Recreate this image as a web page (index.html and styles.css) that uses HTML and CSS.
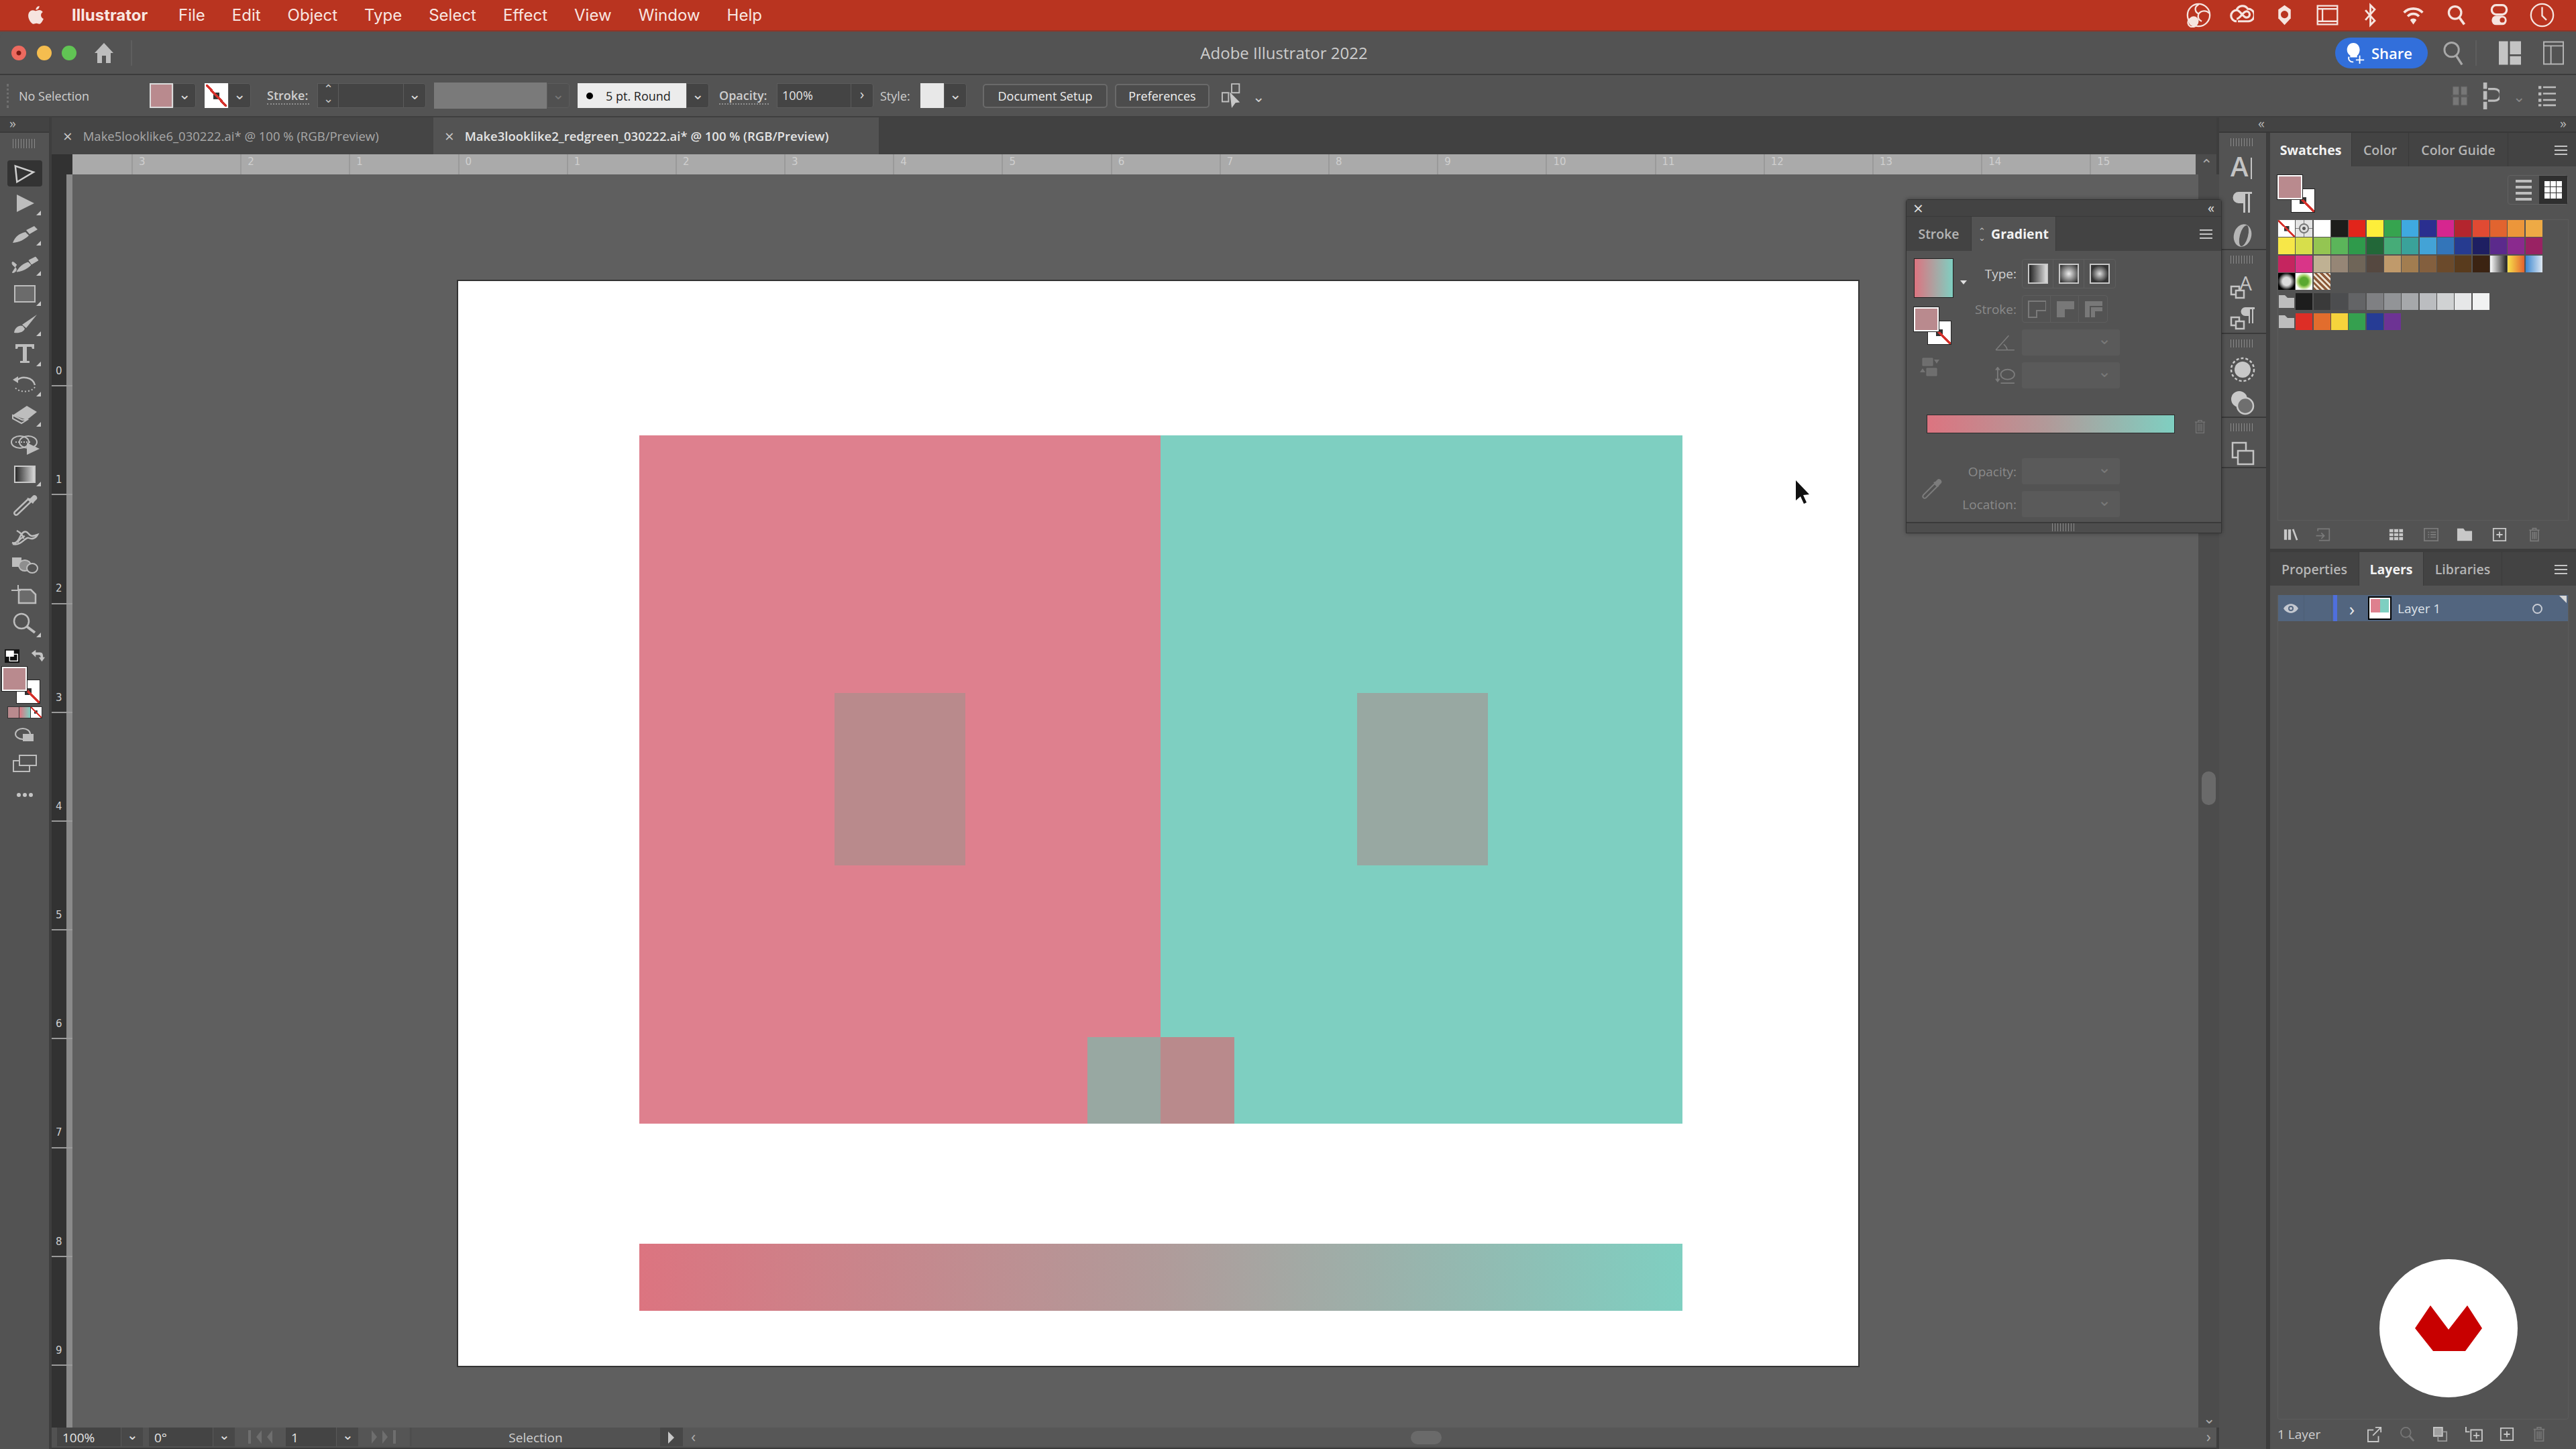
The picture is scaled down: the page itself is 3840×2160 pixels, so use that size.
FILE: index.html
```html
<!DOCTYPE html>
<html lang="en">
<head>
  <meta charset="UTF-8" />
  <title>Adobe Illustrator 2022</title>
  <link rel="stylesheet" href="styles.css">
</head>
<body>
  <!-- mac menu bar -->
  <header class="menubar">
    <svg class="apple" viewBox="0 0 24 30"><path d="M17 2c.3 3-2.400 5.600-5 5.400C11.700 4.700 14.400 2.200 17 2zM12 9c1.300 0 2.700-1.200 5-1.200 1.800 0 3.800 1 5 2.800-4 2.400-3.300 8 1 9.800-1.200 3.200-3.600 7.400-6 7.400-1.600 0-2.400-1-4.200-1s-2.800 1-4.300 1C5.500 27.800 1 21.500 1 16c0-5.200 3.300-8.100 6.500-8.100 1.900 0 3.400 1.100 4.500 1.100z" fill="#f6e4df"/></svg>
    <strong>Illustrator</strong>
    <span>File</span><span>Edit</span><span>Object</span><span>Type</span><span>Select</span><span>Effect</span><span>View</span><span>Window</span><span>Help</span>
    <div class="tray">
      <svg viewBox="0 0 40 40"><circle cx="20" cy="20" r="18" fill="none" stroke="#f6e4df" stroke-width="2.500"/><path d="M20 3c-8 4-6 12 0 15 4-6 13-6 17-1M20 18c-2 6 0 10 5 12M4 28a7 7 0 0 0 12 8 7 7 0 0 0-12-8z" fill="none" stroke="#f6e4df" stroke-width="2.500"/><circle cx="12" cy="30" r="8" fill="#f6e4df"/></svg>
      <svg viewBox="0 0 40 40"><path d="M12 30a9 9 0 0 1 0-18c6 0 10 12 16 12a5 5 0 0 0 0-10c-6 0-10 12-16 12M12 12a10 10 0 0 1 18-2 9 9 0 0 1 1 20H14" fill="none" stroke="#f6e4df" stroke-width="3.500"/></svg>
      <svg viewBox="0 0 40 40"><path d="M20 4l10 7v14l-10 11-10-11V11z" fill="#f6e4df"/><circle cx="20" cy="19" r="6" fill="#b93420"/></svg>
      <svg viewBox="0 0 40 40"><path d="M4 5h32v30H4zM4 10h32M12 10v20M4 30h32" fill="none" stroke="#f6e4df" stroke-width="2.500"/></svg>
      <svg viewBox="0 0 40 40"><path d="M12 12l15 17-7 7V4l7 7-15 17" fill="none" stroke="#f6e4df" stroke-width="3"/></svg>
      <svg viewBox="0 0 40 40"><path d="M5 16a21 21 0 0 1 30 0M11 22a12 12 0 0 1 18 0" fill="none" stroke="#f6e4df" stroke-width="4"/><path d="M20 35l-5-7a6 6 0 0 1 10 0z" fill="#f6e4df"/></svg>
      <svg viewBox="0 0 40 40"><circle cx="18" cy="16" r="10" fill="none" stroke="#f6e4df" stroke-width="3.500"/><path d="M25 24l8 11" stroke="#f6e4df" stroke-width="4"/></svg>
      <svg viewBox="0 0 40 40"><rect x="8" y="4" width="24" height="15" rx="7" fill="none" stroke="#f6e4df" stroke-width="3.500"/><rect x="8" y="21" width="24" height="15" rx="7" fill="#f6e4df"/><circle cx="25" cy="28" r="4" fill="#b93420"/></svg>
      <svg viewBox="0 0 40 40"><circle cx="20" cy="20" r="18" fill="none" stroke="#f6e4df" stroke-width="2.500"/><path d="M20 7v14l7 7" fill="none" stroke="#f6e4df" stroke-width="2.500"/></svg>
    </div>
  </header>

  <!-- app title bar -->
  <div class="titlebar">
    <i class="dot red"></i><i class="dot yellow"></i><i class="dot green"></i>
    <svg class="home" viewBox="0 0 32 30"><path d="M16 0l14 15h-4v15h-7V19h-6v11H6V15H2z" fill="#bdbdbd"/></svg>
    <i class="title-sep"></i>
    <div class="app-title">Adobe Illustrator 2022</div>
    <button class="share">
      <svg viewBox="0 0 36 36"><path d="M16 2c6 0 10 5 10 11 0 4-2 8-4 9v3H11v-3c-3-2-5-5-5-9C6 7 10 2 16 2z" fill="#fff"/><path d="M9 24a6 6 0 0 0 7 8M26 22v13M20 29h13" fill="none" stroke="#fff" stroke-width="2"/></svg>
      Share
    </button>
    <svg class="title-ico search" viewBox="0 0 32 40"><circle cx="14" cy="15" r="11" fill="none" stroke="#a8a8a8" stroke-width="3"/><path d="M21 24l9 14" stroke="#a8a8a8" stroke-width="3.500"/></svg>
    <i class="title-sep right"></i>
    <svg class="title-ico layout" viewBox="0 0 34 36"><path d="M0 0h14v36H0zM17 0h17v20H17zM17 23h17v13H17z" fill="#c4c4c4"/></svg>
    <svg class="title-ico window" viewBox="0 0 32 36"><path d="M1 1h30v34H1zM1 7h30M12 7v28" fill="none" stroke="#b5b5b5" stroke-width="2"/></svg>
  </div>

  <!-- control bar -->
  <div class="controlbar">
    <span class="grip-v"></span>
    <span class="ctl-label no-sel">No Selection</span>
    <span class="chip fill-chip"></span><span class="chev-box">&#8964;</span>
    <span class="chip none-chip"></span><span class="chev-box">&#8964;</span>
    <span class="ctl-label stroke-label">Stroke:</span>
    <span class="spinner">&#8963;<br>&#8964;</span>
    <span class="ctl-field stroke-field"></span><span class="chev-box">&#8964;</span>
    <span class="dash-field"></span><span class="chev-box off">&#8964;</span>
    <span class="brush-field"><i></i>5 pt. Round</span><span class="chev-box">&#8964;</span>
    <span class="ctl-label opacity-label">Opacity:</span>
    <span class="ctl-field opacity-field">100%</span><span class="chev-box">&#8250;</span>
    <span class="ctl-label style-label">Style:</span>
    <span class="chip style-chip"></span><span class="chev-box">&#8964;</span>
    <button class="ctl-btn doc-btn">Document Setup</button>
    <button class="ctl-btn pref-btn">Preferences</button>
    <svg class="arrange" viewBox="0 0 34 40"><path d="M16 1h12v14H16zM1 15h10v14H1z" fill="none" stroke="#c0c0c0" stroke-width="2"/><path d="M13 14l16 16-7 1-6 8z" fill="#c8c8c8"/></svg>
    <span class="plain-chev">&#8964;</span>
    <div class="ctl-right">
      <svg viewBox="0 0 30 40"><path d="M3 4h10v14H3zM17 4h10v14H17zM3 22h10v14H3zM17 22h10v14H17zM0 20h30" fill="#777" stroke="#666"/></svg>
      <svg viewBox="0 0 30 50"><path d="M1 0h7v12H1zM1 16h7v16H1zM1 36h7v14H1z" fill="#bcbcbc"/><path d="M10 12h12a8 8 0 0 1 0 22H10" fill="none" stroke="#bcbcbc" stroke-width="4"/></svg>
      <span class="plain-chev off">&#8964;</span>
      <svg class="ctl-list" viewBox="0 0 30 40"><path d="M0 3h5v5H0zM0 14h5v5H0zM0 25h5v5H0zM0 34h5v4H0z" fill="#bcbcbc"/><path d="M8 5h22M8 16h22M8 27h22M8 36h22" stroke="#bcbcbc" stroke-width="3"/></svg>
    </div>
  </div>

  <div class="workspace">
    <!-- tools -->
    <aside class="toolbar">
      <div class="strip-arrows">&#187;</div>
      <div class="grip"></div>
      <div class="tools">
        <div class="tool active"><svg viewBox="0 0 44 44"><path d="M9 10l26 12-26 12z" fill="none" stroke="#cfcfcf" stroke-width="2.500" transform="rotate(-6 22 22)"/></svg></div>
        <div class="tool more"><svg viewBox="0 0 44 44"><path d="M10 9l26 13-26 13z" fill="#bdbdbd"/></svg></div>
        <div class="tool more"><svg viewBox="0 0 44 44"><path d="M4 36c4-10 10-14 19-16l5 5c-6 6-14 10-24 11zM24 17l12-6 5 5-12 7z" fill="#bdbdbd"/></svg></div>
        <div class="tool more"><svg viewBox="0 0 44 44"><path d="M10 34c5-9 11-12 17-14l4 4c-5 5-12 9-21 10zM28 17l10-5 4 5-10 6zM10 24c-4-4-7-6-7-3 0 5 8 6 6 11-1 3-5 4-6 3" fill="#bdbdbd" stroke="#bdbdbd"/></svg></div>
        <div class="tool more"><svg viewBox="0 0 44 44"><rect x="7" y="10" width="30" height="24" fill="#6b6b6b" stroke="#bdbdbd" stroke-width="2"/></svg></div>
        <div class="tool more"><svg viewBox="0 0 44 44"><path d="M18 24L40 9 24 29zM6 36c1-8 8-12 13-10l3 4c-2 5-8 7-16 6z" fill="#bdbdbd"/></svg></div>
        <div class="tool more"><svg viewBox="0 0 44 44"><path d="M8 8h28v7h-3l-1-3H25v21h4v3H15v-3h4V12h-7l-1 3H8z" fill="#bdbdbd"/></svg></div>
        <div class="tool more"><svg viewBox="0 0 44 44"><path d="M9 18a16 14 0 0 1 28 6" fill="none" stroke="#bdbdbd" stroke-width="2.500"/><path d="M37 27a16 10 0 0 1-30 0" fill="none" stroke="#bdbdbd" stroke-width="2" stroke-dasharray="2 3"/><path d="M4 16l8-5 0 10z" fill="#bdbdbd"/></svg></div>
        <div class="tool more"><svg viewBox="0 0 44 44"><path d="M4 24L25 10l15 9-15 12z" fill="#bdbdbd"/><path d="M4 24l14 7 7 0-8 5-13-7z" fill="#535353" stroke="#bdbdbd" stroke-width="2"/></svg></div>
        <div class="tool"><svg viewBox="0 0 44 44"><ellipse cx="15" cy="19" rx="13" ry="9" fill="none" stroke="#bdbdbd" stroke-width="2"/><ellipse cx="27" cy="19" rx="13" ry="9" fill="none" stroke="#bdbdbd" stroke-width="2"/><path d="M8 19h24" stroke="#bdbdbd" stroke-dasharray="2 2" stroke-width="2"/><path d="M25 20l19 9-19 9z" fill="#bdbdbd"/></svg></div>
        <div class="tool more"><svg viewBox="0 0 44 44"><defs><linearGradient id="tg"><stop offset="0" stop-color="#222"/><stop offset="1" stop-color="#ddd"/></linearGradient></defs><rect x="7" y="10" width="30" height="24" fill="url(#tg)" stroke="#c8c8c8" stroke-width="2"/></svg></div>
        <div class="tool"><svg viewBox="0 0 44 44"><path d="M27 14L7 33c-2 3 1 6 4 4l20-19z" fill="none" stroke="#bdbdbd" stroke-width="2.500"/><path d="M25 12l9 9 2-3 4-4c2-3-3-8-6-5l-4 4z" fill="#bdbdbd"/></svg></div>
        <div class="tool"><svg viewBox="0 0 44 44"><path d="M3 34c5 2 9-2 12-9s8-10 12-5 6 5 14 2c-3 6-9 7-13 5-5-3-10 12-24 9M10 16c6 3 10 8 10 12M11 34c3-5 7-8 11-10" fill="none" stroke="#bdbdbd" stroke-width="2.500"/></svg></div>
        <div class="tool"><svg viewBox="0 0 44 44"><rect x="3" y="11" width="14" height="14" fill="#bdbdbd"/><ellipse cx="22" cy="23" rx="9" ry="8" fill="#8e8e8e" stroke="#bdbdbd" stroke-width="2"/><ellipse cx="33" cy="27" rx="8" ry="7" fill="#535353" stroke="#bdbdbd" stroke-width="2"/></svg></div>
        <div class="tool"><svg viewBox="0 0 44 44"><path d="M13 15h18l7 7v13H13z" fill="#6b6b6b" stroke="#bdbdbd" stroke-width="2.500"/><path d="M2 16h14M12 8v9" stroke="#bdbdbd" stroke-width="2"/></svg></div>
        <div class="tool more"><svg viewBox="0 0 44 44"><circle cx="17" cy="17" r="11" fill="none" stroke="#bdbdbd" stroke-width="2.500"/><path d="M25 25l12 9" stroke="#bdbdbd" stroke-width="4"/></svg></div>
      </div>
      <div class="color-ctl">
        <div class="default-row">
          <svg viewBox="0 0 26 24"><rect x="1" y="1" width="24" height="22" fill="#111"/><rect x="3" y="3" width="13" height="10" fill="#fff"/><rect x="9" y="9" width="13" height="11" fill="none" stroke="#fff" stroke-width="1.500"/></svg>
          <svg viewBox="0 0 24 24"><path d="M2 7l7-5v4h7c4 0 5 3 5 8h3l-5 7-5-7h3c0-3-1-4-3-4H9v4z" fill="#c4c4c4"/></svg>
        </div>
        <div class="fs-stack tool-fs">
          <span class="fs-stroke none-chip"></span>
          <span class="fs-fill"></span>
        </div>
        <div class="mode-row">
          <span class="mode-a"></span><span class="mode-b"></span><span class="mode-c none-chip"></span>
        </div>
        <svg class="draw-mode" viewBox="0 0 30 22"><ellipse cx="12" cy="9" rx="11" ry="8" fill="none" stroke="#bdbdbd" stroke-width="2"/><rect x="12" y="9" width="16" height="11" fill="#bdbdbd"/></svg>
        <svg class="screen-mode" viewBox="0 0 36 26"><path d="M1 9h24v16H1z" fill="#535353" stroke="#bdbdbd" stroke-width="2"/><path d="M10 1h25v15H10z" fill="#535353" stroke="#bdbdbd" stroke-width="2"/></svg>
        <div class="dots"><i></i><i></i><i></i></div>
      </div>
    </aside>

    <!-- document area -->
    <main class="main">
      <nav class="doctabs">
        <div class="doctab"><span class="x">&#215;</span>Make5looklike6_030222.ai* @ 100 % (RGB/Preview)</div>
        <div class="doctab on"><span class="x">&#215;</span>Make3looklike2_redgreen_030222.ai* @ 100 % (RGB/Preview)</div>
      </nav>
      <div class="ruler-row">
        <div class="ruler-corner"></div>
        <div class="hruler">
          <span>3</span><span>2</span><span>1</span><span>0</span><span>1</span><span>2</span><span>3</span><span>4</span><span>5</span><span>6</span><span>7</span><span>8</span><span>9</span><span>10</span><span>11</span><span>12</span><span>13</span><span>14</span><span>15</span>
        </div>
        <div class="scroll-cap">&#8963;</div>
      </div>
      <div class="mid">
        <div class="vruler">
          <span>0</span><span>1</span><span>2</span><span>3</span><span>4</span><span>5</span><span>6</span><span>7</span><span>8</span><span>9</span><span>1<br>0</span>
        </div>
        <div class="canvas">
          <div class="artboard">
            <div class="art art-pink"></div>
            <div class="art art-teal"></div>
            <div class="art sq sq-left"></div>
            <div class="art sq sq-right"></div>
            <div class="art tab-left"></div>
            <div class="art tab-right"></div>
            <div class="art art-bar"></div>
            <svg class="cursor" viewBox="0 0 24 36"><path d="M2 1l20 21-9 1 5 11-4 2-5-11-7 6z" fill="#111"/></svg>
          </div>
        </div>
        <div class="vscroll">
          <i class="thumb"></i>
          <span class="vs-down">&#8964;</span>
        </div>
      </div>
      <footer class="status">
        <span class="st-field st-zoom">100%</span><span class="st-chev">&#8964;</span>
        <span class="st-field st-rot">0&#176;</span><span class="st-chev">&#8964;</span>
        <span class="st-nav"><i class="bar"></i><i class="lt"></i><i class="lt"></i></span>
        <span class="st-field st-page">1</span><span class="st-chev">&#8964;</span>
        <span class="st-nav"><i class="gt"></i><i class="gt"></i><i class="bar"></i></span>
        <span class="st-mode">Selection</span>
        <span class="st-play"></span>
        <span class="st-hbar"><em>&#8249;</em><i></i><em class="end">&#8250;</em></span>
      </footer>
    </main>

    <!-- right dock -->
    <aside class="dock">
      <div class="dock-top"><span>&#171;</span><span>&#187;</span></div>
      <div class="dock-body">
        <div class="strip">
          <section class="strip-group g1">
            <div class="grip"></div>
            <svg viewBox="0 0 40 40"><text x="2" y="32" class="ico-a">A</text><path d="M33 4v32" stroke="#c4c4c4" stroke-width="2"/></svg>
            <svg viewBox="0 0 40 40"><path d="M14 5h20v3h-3v28h-3V8h-4v28h-3V22h-7a8.500 8.500 0 0 1 0-17z" fill="#c4c4c4"/></svg>
            <svg viewBox="0 0 40 40"><ellipse cx="20" cy="20" rx="13" ry="17" fill="#b5b5b5" transform="rotate(15 20 20)"/><ellipse cx="22" cy="20" rx="6" ry="16" fill="#535353" transform="rotate(15 20 20)"/></svg>
          </section>
          <section class="strip-group g2">
            <div class="grip"></div>
            <svg viewBox="0 0 40 40"><text x="15" y="27" class="ico-a small">A</text><path d="M3 21h12v12H3z" fill="none" stroke="#c4c4c4" stroke-width="2.500"/><path d="M10 27h12v11H10z" fill="#535353" stroke="#c4c4c4" stroke-width="2.500"/></svg>
            <svg viewBox="0 0 40 40"><path d="M24 2h14v3h-2v21h-2V5h-3v21h-2V15h-5a6.500 6.500 0 0 1 0-13z" fill="#c4c4c4"/><path d="M3 17h12v12H3z" fill="none" stroke="#c4c4c4" stroke-width="2.500"/><path d="M10 23h12v11H10z" fill="#535353" stroke="#c4c4c4" stroke-width="2.500"/></svg>
          </section>
          <section class="strip-group g3">
            <div class="grip"></div>
            <svg viewBox="0 0 40 40"><circle cx="20" cy="20" r="12" fill="#c8c8c8"/><circle cx="20" cy="20" r="17" fill="none" stroke="#c8c8c8" stroke-width="2.500" stroke-dasharray="4 3"/></svg>
            <svg viewBox="0 0 40 40"><circle cx="15" cy="14" r="12" fill="#c8c8c8"/><circle cx="24" cy="24" r="12" fill="#6f6f6f" stroke="#c8c8c8" stroke-width="2.500"/></svg>
          </section>
          <section class="strip-group g4">
            <div class="grip"></div>
            <svg viewBox="0 0 40 40"><path d="M5 4h20v22H5z" fill="none" stroke="#c4c4c4" stroke-width="2.500"/><path d="M13 16h23v20H13z" fill="#535353" stroke="#c4c4c4" stroke-width="2.500"/></svg>
          </section>
        </div>

        <div class="panels">
          <section class="panel swatches">
            <div class="ptabs">
              <span class="ptab on w-swatches">Swatches</span><span class="ptab w-color">Color</span><span class="ptab w-guide">Color Guide</span>
              <span class="burger"></span>
            </div>
            <div class="swatch-body">
              <div class="swatch-head">
                <div class="fs-stack">
                  <span class="fs-stroke none-chip"></span>
                  <span class="fs-fill"></span>
                </div>
                <div class="view-toggle">
                  <span class="v-list"><i></i><i></i><i></i><i></i></span>
                  <span class="v-grid"><i></i><i></i><i></i><i></i><i></i><i></i><i></i><i></i><i></i></span>
                </div>
              </div>
              <div class="swatch-box">
                <div class="swatch-grid">
                  <b class="none-chip"></b><b class="reg"></b><b style="background:#fff"></b><b style="background:#1d1d1b"></b><b style="background:#e1251b"></b><b style="background:#fdee3a"></b><b style="background:#36a44f"></b><b style="background:#3fa9e0"></b><b style="background:#2a2f8f"></b><b style="background:#d6268f"></b><b style="background:#b4252e"></b><b style="background:#e04a33"></b><b style="background:#e1642f"></b><b style="background:#ec963a"></b><b style="background:#eeaa45"></b>
                  <b style="background:#f7e748"></b><b style="background:#d7de4b"></b><b style="background:#94c552"></b><b style="background:#5bb55a"></b><b style="background:#2f9a4b"></b><b style="background:#226738"></b><b style="background:#46ac78"></b><b style="background:#3aa29a"></b><b style="background:#43a3d6"></b><b style="background:#3375b9"></b><b style="background:#263b90"></b><b style="background:#1e1f62"></b><b style="background:#5b2a8c"></b><b style="background:#8a2a8e"></b><b style="background:#992263"></b>
                  <b style="background:#c5255f"></b><b style="background:#d93588"></b><b style="background:#bfb193"></b><b style="background:#968676"></b><b style="background:#6f6558"></b><b style="background:#554840"></b><b style="background:#c09a6b"></b><b style="background:#a27d50"></b><b style="background:#835f3e"></b><b style="background:#6b4a2b"></b><b style="background:#593b1d"></b><b style="background:#3b2312"></b><b class="g-bw"></b><b class="g-yr"></b><b class="g-blue"></b>
                  <b class="g-rad"></b><b class="g-green"></b><b class="g-brown"></b>
                </div>
                <div class="swatch-group">
                  <svg class="folder" viewBox="0 0 25 21"><path d="M1 20V1h9l4 4h10v15z" fill="#bdbdbd"/></svg>
                  <b style="background:#1d1d1d"></b><b style="background:#3a3a3a"></b><b style="background:#4c4d4f"></b><b style="background:#636466"></b><b style="background:#7f8083"></b><b style="background:#929497"></b><b style="background:#a6a8ab"></b><b style="background:#bbbdc0"></b><b style="background:#d0d2d3"></b><b style="background:#e6e7e8"></b><b style="background:#f1f2f2"></b>
                </div>
                <div class="swatch-group">
                  <svg class="folder" viewBox="0 0 25 21"><path d="M1 20V1h9l4 4h10v15z" fill="#bdbdbd"/></svg>
                  <b style="background:#dd2e26"></b><b style="background:#e26d2d"></b><b style="background:#f6d33c"></b><b style="background:#35a04f"></b><b style="background:#263c95"></b><b style="background:#6d3394"></b>
                </div>
              </div>
              <div class="panel-foot sw-foot">
                <svg viewBox="0 0 28 24" class="f1"><path d="M1 3h5v18H1zM8 3h5v18H8zM15 3l3-1 7 19-3 1z" fill="#c8c8c8"/></svg>
                <svg viewBox="0 0 28 24" class="f2"><path d="M6 6V2h20v20H8M3 14h14m-5-5l5 5-5 5" fill="none" stroke="#7a7a7a" stroke-width="2"/></svg>
                <svg viewBox="0 0 24 24" class="f3"><path d="M1 3h22v18H1z" fill="#c8c8c8"/><path d="M8 3v18M16 3v18M1 9h22M1 15h22" stroke="#535353" stroke-width="1.500"/></svg>
                <svg viewBox="0 0 24 24" class="f4"><path d="M1 2h22v20H1zM7 8h2M11 8h9M7 12h2M11 12h9M7 16h2M11 16h9" fill="none" stroke="#7a7a7a" stroke-width="2"/></svg>
                <svg viewBox="0 0 26 22" class="f5"><path d="M1 21V1h10l3 4h11v16z" fill="#c8c8c8"/></svg>
                <svg viewBox="0 0 24 24" class="f6"><path d="M2 2h20v20H2zM7 12h10M12 7v10" fill="none" stroke="#c8c8c8" stroke-width="2"/></svg>
                <svg viewBox="0 0 22 26" class="f7"><path d="M2 5h18M8 5V2h6v3M4 5v19h14V5M8 8v13M11 8v13M14 8v13" fill="none" stroke="#7a7a7a" stroke-width="2"/></svg>
              </div>
            </div>
          </section>

          <section class="panel layers">
            <div class="ptabs">
              <span class="ptab w-props">Properties</span><span class="ptab on w-layers">Layers</span><span class="ptab w-libs">Libraries</span>
              <span class="burger"></span>
            </div>
            <div class="layers-body">
              <div class="layers-box">
                <div class="layer-row">
                  <svg class="eye" viewBox="0 0 24 16"><path d="M1 8c5-9 17-9 22 0-5 9-17 9-22 0z" fill="#c4c8d0"/><circle cx="12" cy="8" r="4" fill="#52657f"/><circle cx="12" cy="8" r="2" fill="#c4c8d0"/></svg>
                  <span class="lock-cell"></span>
                  <i class="layer-color"></i>
                  <span class="layer-arrow">&#8250;</span>
                  <span class="layer-thumb"><i class="t-pink"></i><i class="t-teal"></i></span>
                  <span class="layer-name">Layer 1</span>
                  <i class="target"></i>
                  <i class="corner"></i>
                </div>
              </div>
              <div class="panel-foot lay-foot">
                <span class="count">1 Layer</span>
                <svg viewBox="0 0 24 26" class="l1"><path d="M10 6H1v19h17v-9M9 15L22 2M13 2h9v8" fill="none" stroke="#c8c8c8" stroke-width="2"/></svg>
                <svg viewBox="0 0 24 26" class="l2"><circle cx="9" cy="10" r="8" fill="none" stroke="#777" stroke-width="2"/><path d="M15 16l7 8" stroke="#777" stroke-width="3"/></svg>
                <svg viewBox="0 0 24 26" class="l3"><path d="M1 2h14v14H1z" fill="#a0a0a0" stroke="#c8c8c8" stroke-width="2"/><path d="M15 9h7v15H8v-8" fill="none" stroke="#9a9a9a" stroke-width="2"/></svg>
                <svg viewBox="0 0 30 26" class="l4"><path d="M11 6h18v18H11zM20 10v10M15 15h10M3 1v8h6" fill="none" stroke="#c8c8c8" stroke-width="2"/></svg>
                <svg viewBox="0 0 24 24" class="l5"><path d="M2 2h20v20H2zM7 12h10M12 7v10" fill="none" stroke="#c8c8c8" stroke-width="2"/></svg>
                <svg viewBox="0 0 22 26" class="l6"><path d="M2 5h18M8 5V2h6v3M4 5v19h14V5M8 8v13M11 8v13M14 8v13" fill="none" stroke="#777" stroke-width="2"/></svg>
              </div>
            </div>
          </section>
        </div>
      </div>
    </aside>
  </div>

  <!-- floating gradient panel -->
  <section class="float-panel">
    <div class="fp-title"><span class="fp-x">&#215;</span><span class="fp-collapse">&#171;</span></div>
    <div class="ptabs fp-tabs">
      <span class="ptab w-stroke">Stroke</span>
      <span class="ptab on w-gradient"><em>&#8963;<br>&#8964;</em>Gradient</span>
      <span class="burger"></span>
    </div>
    <div class="fp-body">
      <div class="fp-left">
        <div class="grad-preview"><span class="grad-chip"></span><i></i></div>
        <div class="fs-stack big">
          <span class="fs-stroke none-chip"></span>
          <span class="fs-fill"></span>
        </div>
        <svg class="reverse" viewBox="0 0 30 28"><path d="M5 1h15v11H5zM11 16h15v11H11z" fill="#6e6e6e" stroke="#747474"/><path d="M22 3h8l-4 6zM1 22h8l-4-6z" fill="#747474"/></svg>
        <svg class="fp-drop" viewBox="0 0 34 34"><path d="M21 10L4 27c-2 3 1 6 4 4l17-17z" fill="none" stroke="#7c7c7c" stroke-width="2"/><path d="M19 8l7 7 2-3 3-3c2-3-3-8-6-5l-3 3z" fill="#7c7c7c"/></svg>
      </div>
      <div class="fp-form">
        <div class="fp-row type-row">
          <span class="fp-label on">Type:</span>
          <span class="seg">
            <b><i class="gt-linear"></i></b><b><i class="gt-radial"></i></b><b><i class="gt-free"></i></b>
          </span>
        </div>
        <div class="fp-row stroke-row">
          <span class="fp-label">Stroke:</span>
          <span class="seg off">
            <b><svg viewBox="0 0 28 28"><path d="M2 26V2h26v14H14v10z" fill="none" stroke="#7a7a7a" stroke-width="2"/></svg></b>
            <b><svg viewBox="0 0 28 28"><path d="M2 2h26v12H14v12H2z" fill="#787878"/></svg></b>
            <b><svg viewBox="0 0 28 28"><path d="M2 26V2h26v7H9v17zM11 26V11h17v6H17v9z" fill="#787878"/></svg></b>
          </span>
        </div>
        <div class="fp-row combo-row">
          <svg class="fp-ico" viewBox="0 0 28 24"><path d="M1 22h26M1 22L19 2M12 14a14 14 0 0 1 5 8" fill="none" stroke="#7c7c7c" stroke-width="1.500"/></svg>
          <span class="combo">&#8964;</span>
        </div>
        <div class="fp-row combo-row">
          <svg class="fp-ico" viewBox="0 0 32 28"><ellipse cx="20" cy="12" rx="11" ry="8" fill="none" stroke="#7c7c7c" stroke-width="2"/><path d="M4 1v22M1 5l3-4 3 4M1 19l3 4 3-4M9 26h22" fill="none" stroke="#7c7c7c" stroke-width="2"/></svg>
          <span class="combo">&#8964;</span>
        </div>
      </div>
      <div class="fp-ramp">
        <div class="ramp"></div>
        <svg class="fp-trash" viewBox="0 0 22 26"><path d="M2 5h18M8 5V2h6v3M4 5v19h14V5M8 8v13M11 8v13M14 8v13" fill="none" stroke="#757575" stroke-width="1.500"/></svg>
      </div>
      <div class="fp-form fp-lower">
        <div class="fp-row combo-row"><span class="fp-label">Opacity:</span><span class="combo">&#8964;</span></div>
        <div class="fp-row combo-row"><span class="fp-label">Location:</span><span class="combo">&#8964;</span></div>
      </div>
    </div>
    <div class="fp-foot"><div class="grip"></div></div>
  </section>

  <!-- watermark logo -->
  <div class="logo">
    <svg viewBox="0 0 100 68"><path d="M0 34L23 0l27 36L78 0l22 34-25 34H27z" fill="#c80000"/></svg>
  </div>
</body>
</html>
```

FILE: styles.css
```css
* {
  box-sizing: border-box;
}

html, body {
  margin: 0;
  width: 3840px;
  height: 2160px;
  overflow: hidden;
}

body {
  position: relative;
  display: flex;
  flex-direction: column;
  background: #535353;
  color: #c8c8c8;
  font-family: "Open Sans", "Noto Sans", sans-serif;
  font-size: 19px;
}

button {
  font-family: inherit;
}

/* ---------- menu bar ---------- */
.menubar {
  height: 47px;
  display: flex;
  align-items: center;
  padding-left: 41px;
  background: #b93420;
  color: #f8e6e1;
  font-family: "Inter", sans-serif;
  font-size: 24px;
  border-bottom: 2px solid #8d3527;
}

.apple {
  width: 25px;
  height: 31px;
  margin-right: 41px;
}

.menubar strong {
  width: 119px;
  margin-right: 40px;
  font-size: 24px;
  white-space: nowrap;
}

.menubar span {
  margin-right: 40px;
}

.tray {
  margin-left: auto;
  display: flex;
  align-items: center;
  gap: 27px;
  padding-right: 32px;
}

.tray svg {
  width: 37px;
  height: 37px;
}

/* ---------- title bar ---------- */
.titlebar {
  position: relative;
  height: 65px;
  display: flex;
  align-items: center;
  background: #535353;
  border-bottom: 2px solid #3b3b3b;
  border-radius: 10px 10px 0 0;
}

.dot {
  width: 22px;
  height: 22px;
  border-radius: 50%;
  margin-left: 15.500px;
}

.dot.red {
  margin-left: 17px;
  background: radial-gradient(circle, #7c1a14 0 3px, #ee6a5f 4px);
}

.dot.yellow {
  background: #f5bd4f;
}

.dot.green {
  background: #61c454;
}

.home {
  width: 32px;
  height: 30px;
  margin-left: 25px;
}

.title-sep {
  width: 2px;
  height: 38px;
  margin-left: 24px;
  background: #5e5e5e;
}

.app-title {
  position: absolute;
  left: 0;
  right: 0;
  padding-right: 12px;
  text-align: center;
  font-size: 24px;
  color: #cdcdcd;
  line-height: 63px;
}

.share {
  margin-left: auto;
  width: 138px;
  height: 46px;
  display: flex;
  align-items: center;
  gap: 8px;
  padding: 0 0 0 12px;
  border: 0;
  border-radius: 23px;
  background: #326fdb;
  color: #fff;
  font-size: 22px;
  font-weight: 600;
}

.share svg {
  width: 34px;
  height: 34px;
  flex: none;
}

.title-ico {
  height: 36px;
}

.title-ico.search {
  width: 31px;
  height: 40px;
  margin-left: 22px;
}

.title-sep.right {
  margin-left: 18px;
}

.title-ico.layout {
  width: 33px;
  margin-left: 33px;
}

.title-ico.window {
  width: 31px;
  margin-left: 33px;
  margin-right: 18px;
}

/* ---------- control bar ---------- */
.controlbar {
  height: 63px;
  display: flex;
  align-items: center;
  background: #535353;
  border-bottom: 2px solid #3f3f3f;
  font-size: 18px;
}

.grip-v {
  width: 3px;
  height: 36px;
  margin-left: 10px;
  border-left: 3px dotted #6f6f6f;
}

.ctl-label {
  color: #cfcfcf;
  white-space: nowrap;
}

.no-sel {
  width: 195px;
  margin-left: 15px;
}

.chip {
  width: 35px;
  height: 37px;
  border: 2px solid #dcdcdc;
}

.fill-chip {
  background: #b98a8e;
}

.none-chip {
  position: relative;
  background:
    linear-gradient(to top right, transparent 46%, #d5312b 46% 54%, transparent 54%),
    linear-gradient(#333, #333) center / 30% 30% no-repeat,
    #fff;
}

.chip.none-chip {
  margin-left: 13px;
  border-color: #fff;
}

.style-chip {
  margin-left: 11px;
  background: #e8e8e8;
  border: 0;
}

.chev-box {
  width: 34px;
  height: 37px;
  flex: none;
  background: #444;
  border: 1px solid #5c5c5c;
  border-radius: 0 4px 4px 0;
  color: #dcdcdc;
  text-align: center;
  font-size: 22px;
  line-height: 29px;
}

.chev-box.off {
  color: #777;
  background: #505050;
}

.stroke-label {
  margin-left: 24px;
  width: 63px;
  font-weight: 600;
  border-bottom: 2px dotted #8f8f8f;
}

.spinner {
  width: 32px;
  height: 37px;
  margin-left: 12px;
  background: #444;
  border: 1px solid #5c5c5c;
  text-align: center;
  font-size: 18px;
  line-height: 14px;
}

.ctl-field {
  height: 37px;
  background: #444;
  border-top: 1px solid #5c5c5c;
  border-bottom: 1px solid #5c5c5c;
}

.stroke-field {
  width: 96px;
}

.dash-field {
  width: 168px;
  height: 39px;
  margin-left: 12px;
  background: #7a7a7a;
}

.brush-field {
  width: 162px;
  height: 37px;
  margin-left: 12px;
  display: flex;
  align-items: center;
  background: #ececec;
  color: #222;
  font-size: 18px;
}

.brush-field i {
  width: 10px;
  height: 10px;
  margin: 0 19px 0 13px;
  border-radius: 50%;
  background: #000;
}

.opacity-label {
  margin-left: 15px;
  width: 74px;
  font-weight: 600;
  border-bottom: 2px dotted #8f8f8f;
}

.opacity-field {
  width: 110px;
  margin-left: 12px;
  padding-left: 7px;
  line-height: 35px;
  color: #e4e4e4;
  border-left: 1px solid #5c5c5c;
}

.style-label {
  margin-left: 10px;
  width: 49px;
}

.ctl-btn {
  height: 36px;
  background: #4c4c4c;
  border: 2px solid #6a6a6a;
  border-radius: 5px;
  color: #f0f0f0;
  font-size: 18px;
  padding: 0;
}

.doc-btn {
  width: 186px;
  margin-left: 24px;
}

.pref-btn {
  width: 141px;
  margin-left: 11px;
}

.arrange {
  width: 32px;
  height: 38px;
  margin-left: 18px;
}

.plain-chev {
  margin-left: 14px;
  font-size: 22px;
  color: #d0d0d0;
  line-height: 22px;
}

.plain-chev.off {
  color: #888;
  margin-left: 0;
}

.ctl-right {
  margin-left: auto;
  display: flex;
  align-items: center;
  gap: 20px;
  padding-right: 30px;
}

.ctl-right svg {
  width: 26px;
  height: 40px;
}

/* ---------- workspace ---------- */
.workspace {
  height: 1985px;
  display: flex;
}

.grip {
  height: 14px;
  width: 36px;
  margin: 0 auto;
  background: repeating-linear-gradient(90deg, #8a8a8a 0 1.500px, transparent 1.500px 4px);
  background-size: 100% 14px;
}

/* ---------- tool bar ---------- */
.toolbar {
  width: 77px;
  flex: none;
  background: #535353;
  border-right: 4px solid #3e3e3e;
}

.strip-arrows {
  height: 23px;
  padding-left: 14px;
  background: #434343;
  border-bottom: 2px solid #3a3a3a;
  color: #bbb;
  font-size: 20px;
  line-height: 18px;
}

.toolbar > .grip {
  margin-top: 9px;
  margin-bottom: 14.500px;
}

.tool {
  position: relative;
  width: 73px;
  height: 44.900px;
  display: flex;
  align-items: center;
  justify-content: center;
}

.tool svg {
  width: 44px;
  height: 44px;
}

.tool.active::before {
  content: "";
  position: absolute;
  left: 11px;
  top: 3px;
  width: 52px;
  height: 39px;
  background: #333;
  border-radius: 4px;
}

.tool.active svg {
  position: relative;
}

.tool.more::after {
  content: "";
  position: absolute;
  right: 12px;
  bottom: 4px;
  border-left: 7px solid transparent;
  border-bottom: 7px solid #c8c8c8;
}

.color-ctl {
  display: flex;
  flex-direction: column;
  align-items: center;
}

.default-row {
  width: 62px;
  display: flex;
  justify-content: space-between;
  margin-top: 13px;
}

.default-row svg {
  width: 24px;
  height: 22px;
}

.fs-stack {
  position: relative;
  width: 56px;
  height: 56px;
}

.tool-fs {
  margin: 5px 10px 0 0;
  width: 57px;
  height: 55px;
}

.fs-fill {
  position: absolute;
  left: 0;
  top: 0;
  width: 37px;
  height: 36px;
  background: #b98a8e;
  border: 2px solid #fff;
  outline: 1px solid #222;
}

.fs-stroke {
  position: absolute;
  right: 0;
  bottom: 0;
  width: 36px;
  height: 36px;
  border: 1px solid #222;
}

.mode-row {
  display: flex;
  width: 52px;
  height: 18px;
  margin-top: 4px;
  border: 1px solid #333;
}

.mode-row span {
  flex: 1;
}

.mode-a {
  background: #b98a8e;
}

.mode-b {
  background: linear-gradient(90deg, #dc7480, #7fcfc1);
  border-left: 1px solid #333;
  border-right: 1px solid #333;
}

.draw-mode {
  width: 30px;
  height: 22px;
  margin-top: 14px;
}

.screen-mode {
  width: 36px;
  height: 26px;
  margin-top: 18px;
}

.dots {
  display: flex;
  gap: 3px;
  margin-top: 31px;
}

.dots i {
  width: 6px;
  height: 6px;
  border-radius: 50%;
  background: #c4c4c4;
}

/* ---------- document ---------- */
.main {
  width: 3231px;
  flex: none;
  display: flex;
  flex-direction: column;
  border-right: 4px solid #3d3d3d;
  background: #414141;
}

.doctabs {
  height: 55px;
  display: flex;
  background: #414141;
}

.doctab {
  width: 569px;
  display: flex;
  align-items: center;
  padding-left: 17px;
  background: #454545;
  color: #a8a8a8;
  font-size: 18.500px;
  white-space: nowrap;
}

.doctab.on {
  width: 664px;
  background: #535353;
  color: #e4e4e4;
  font-weight: 600;
}

.doctab .x {
  margin-right: 16px;
  font-size: 24px;
  font-weight: 400;
  color: #c8c8c8;
}

.ruler-row {
  height: 30px;
  display: flex;
  background: #323232;
}

.ruler-corner {
  width: 31px;
  background: #323232;
}

.hruler {
  width: 3169px;
  display: flex;
  padding-left: 88px;
  overflow: hidden;
  font-family: "DejaVu Sans", sans-serif;
  font-size: 15px;
  line-height: 22px;
  color: #cfcfcf;
  background-color: #323232;
  background-image:
    linear-gradient(#aaa, #aaa),
    linear-gradient(#888, #888);
  background-repeat: repeat-x;
  background-size: 162.200px 100%, 20.275px 8px;
  background-position: 88px 0, 88px 100%;
}

.hruler span {
  flex: none;
  width: 162.200px;
  padding-left: 9px;
  border-left: 2px solid #9a9a9a;
}

.scroll-cap {
  width: 31px;
  background: #4c4c4c;
  text-align: center;
  font-size: 22px;
  line-height: 28px;
  color: #aaa;
}

.mid {
  height: 1868px;
  display: flex;
}

.vruler {
  width: 31px;
  flex: none;
  padding-top: 158px;
  display: flex;
  flex-direction: column;
  overflow: hidden;
  font-family: "DejaVu Sans", sans-serif;
  font-size: 15px;
  line-height: 15px;
  color: #cfcfcf;
  background-color: #323232;
  background-image: linear-gradient(#8a8a8a, #8a8a8a);
  background-repeat: repeat-y;
  background-size: 9px 20.275px;
  background-position: 100% 0;
}

.vruler span {
  flex: none;
  height: 162.200px;
  padding: 132px 0 0 6px;
  border-bottom: 2px solid #9a9a9a;
  transform: translateY(-4px);
}

.canvas {
  position: relative;
  width: 3169px;
  flex: none;
  background: #5f5f5f;
}

/* the art on the canvas, placed at its own coordinates */
.artboard {
  position: absolute;
  left: 575px;
  top: 159px;
  width: 2087px;
  height: 1617px;
  background: #fff;
  box-shadow: 0 0 0 2px #333;
}

.art {
  position: absolute;
}

.art-pink {
  left: 270px;
  top: 230px;
  width: 777px;
  height: 1026px;
  background: #de808e;
}

.art-teal {
  left: 1047px;
  top: 230px;
  width: 778px;
  height: 1026px;
  background: #7ecfc1;
}

.sq {
  top: 614px;
  width: 195px;
  height: 257px;
}

.sq-left {
  left: 561px;
  background: #b98a8c;
}

.sq-right {
  left: 1340px;
  background: #98a8a2;
}

.tab-left {
  left: 938px;
  top: 1127px;
  width: 109px;
  height: 129px;
  background: #98a8a2;
}

.tab-right {
  left: 1047px;
  top: 1127px;
  width: 110px;
  height: 129px;
  background: #b98a8c;
}

.art-bar {
  left: 270px;
  top: 1435px;
  width: 1555px;
  height: 100px;
  background: linear-gradient(90deg, #dc7480, #b09b9a 50%, #7fcfc1);
}

.cursor {
  position: absolute;
  left: 1992px;
  top: 296px;
  width: 24px;
  height: 36px;
}

.vscroll {
  position: relative;
  width: 31px;
  flex: none;
  background: #4c4c4c;
}

.vscroll .thumb {
  position: absolute;
  left: 5px;
  top: 890px;
  width: 21px;
  height: 50px;
  border-radius: 10px;
  background: #6a6a6a;
}

.vs-down {
  position: absolute;
  left: 0;
  right: 0;
  bottom: 4px;
  text-align: center;
  font-size: 22px;
  line-height: 22px;
  color: #aaa;
}

.status {
  height: 32px;
  display: flex;
  align-items: stretch;
  padding-bottom: 2px;
  padding-left: 8px;
  background: #525252;
  border-bottom: 2px solid #3a3a3a;
  font-size: 19px;
  color: #e4e4e4;
}

.st-field {
  background: #444;
  padding-left: 8px;
  line-height: 30px;
}

.st-zoom {
  width: 95px;
}

.st-rot {
  width: 95px;
  margin-left: 9px;
}

.st-page {
  width: 75px;
}

.st-chev {
  width: 33px;
  background: #484848;
  border-left: 1px solid #5a5a5a;
  text-align: center;
  font-size: 20px;
  line-height: 22px;
}

.st-nav {
  width: 76px;
  display: flex;
  align-items: center;
  justify-content: center;
  gap: 8px;
  background: #555;
}

.st-nav i {
  display: block;
}

.st-nav .bar {
  width: 4px;
  height: 20px;
  background: #6e6e6e;
}

.st-nav .lt {
  border: 10px solid transparent;
  border-right: 8px solid #6e6e6e;
  border-left: 0;
}

.st-nav .gt {
  border: 10px solid transparent;
  border-left: 8px solid #6e6e6e;
  border-right: 0;
}

.st-mode {
  width: 372px;
  margin-left: 2px;
  text-align: center;
  line-height: 30px;
  color: #d0d0d0;
  border-left: 1px solid #484848;
}

.st-play {
  width: 34px;
  position: relative;
  background: #474747;
}

.st-play::after {
  content: "";
  position: absolute;
  left: 12px;
  top: 6px;
  border: 9px solid transparent;
  border-left: 9px solid #c8c8c8;
  border-right: 0;
}

.st-hbar {
  position: relative;
  flex: 1;
  display: flex;
  justify-content: space-between;
  padding: 0 8px 0 12px;
  background: #575757;
  color: #aaa;
  font-size: 24px;
  line-height: 26px;
}

.st-hbar em {
  font-style: normal;
}

.st-hbar i {
  position: absolute;
  left: 1085px;
  top: 5px;
  width: 46px;
  height: 20px;
  border-radius: 10px;
  background: #6a6a6a;
}

/* ---------- right dock ---------- */
.dock {
  flex: 1;
  display: flex;
  flex-direction: column;
  background: #3d3d3d;
}

.dock-top {
  height: 23px;
  display: flex;
  justify-content: space-between;
  padding: 0 14px 0 58px;
  background: #434343;
  border-bottom: 2px solid #383838;
  color: #b8b8b8;
  font-size: 20px;
  line-height: 18px;
}

.dock-body {
  flex: 1;
  display: flex;
}

.strip {
  width: 71px;
  flex: none;
  background: #505050;
  border-right: 1px solid #3c3c3c;
}

.strip-group {
  display: flex;
  flex-direction: column;
  align-items: center;
  padding-top: 4px;
  background: #535353;
  border-bottom: 2px solid #3a3a3a;
}

.strip-group .grip {
  height: 12px;
  margin-top: 4px;
  margin-bottom: 3px;
}

.strip-group svg {
  width: 40px;
  height: 40px;
  margin-top: 10px;
}

.g1 {
  height: 175px;
}

.g2 {
  height: 125px;
}

.g3 {
  height: 125px;
}

.g4 {
  height: 75px;
}

.ico-a {
  font-family: "Open Sans", sans-serif;
  font-size: 40px;
  font-weight: 600;
  fill: #c4c4c4;
}

.ico-a.small {
  font-size: 30px;
  font-weight: 400;
}

.panels {
  margin-left: 5px;
  flex: 1;
  display: flex;
  flex-direction: column;
  gap: 5px;
}

.panel {
  display: flex;
  flex-direction: column;
  background: #535353;
}

.swatches {
  height: 620px;
}

.layers {
  flex: 1;
}

.ptabs {
  position: relative;
  flex: none;
  height: 50px;
  display: flex;
  align-items: center;
  background: #434343;
  font-size: 19.500px;
  font-weight: 600;
  color: #b5b5b5;
}

.ptab {
  height: 100%;
  flex: none;
  display: flex;
  align-items: center;
  justify-content: center;
  border-right: 1px solid #3a3a3a;
  white-space: nowrap;
}

.ptab.on {
  background: #535353;
  color: #f2f2f2;
  font-weight: 700;
}

.w-swatches { width: 122px; }
.w-color { width: 85px; }
.w-guide { width: 148px; }
.w-props { width: 133px; }
.w-layers { width: 96px; }
.w-libs { width: 117px; }
.w-stroke { width: 97px; }
.w-gradient { width: 126px; }

.burger {
  position: absolute;
  right: 13px;
  top: 19px;
  width: 19px;
  height: 14px;
  border-top: 2px solid #c4c4c4;
  border-bottom: 2px solid #c4c4c4;
  background: linear-gradient(#c4c4c4, #c4c4c4) center / 100% 2px no-repeat;
}

.swatch-body {
  flex: 1;
  display: flex;
  flex-direction: column;
  padding: 13px 11px 0;
}

.swatch-head {
  height: 66px;
  display: flex;
  justify-content: space-between;
}

.view-toggle {
  width: 90px;
  height: 44px;
  margin-right: 1px;
  display: flex;
  border: 1px solid #626262;
  border-radius: 4px;
}

.v-list {
  width: 46px;
  display: flex;
  flex-direction: column;
  justify-content: center;
  gap: 5px;
  padding: 0 11px;
}

.v-list i {
  height: 4px;
  background: #bdbdbd;
}

.v-grid {
  flex: 1;
  display: grid;
  grid-template-columns: repeat(3, 8px);
  grid-auto-rows: 8px;
  gap: 1px;
  align-content: center;
  justify-content: center;
  background: #2f2f2f;
}

.v-grid i {
  background: #fff;
}

.swatch-box {
  flex: 1;
  margin-top: 0;
  padding-top: 0;
  border: 1px solid #626262;
  border-width: 1px 1px 1px 1px;
  border-color: #5c5c5c;
}

.swatch-grid {
  display: grid;
  grid-template-columns: repeat(15, 25px);
  grid-auto-rows: 25px;
  gap: 1.330px;
}

.swatch-grid b, .swatch-group b {
  display: block;
  width: 25px;
  height: 25px;
}

.reg {
  background:
    radial-gradient(circle, #555 0 2px, #ddd 3px 5px, #777 6px 7px, transparent 8px),
    linear-gradient(#777, #777) center / 100% 1px no-repeat,
    linear-gradient(#777, #777) center / 1px 100% no-repeat,
    #e4e4e4;
}

.g-bw { background: linear-gradient(90deg, #fff, #222); }
.g-yr { background: linear-gradient(90deg, #f8e14a, #e2622f); }
.g-blue { background: linear-gradient(90deg, #3b86cf, #dfe8f2); }
.g-rad { background: radial-gradient(circle, #ddd 0 6px, #888 9px, #000 13px); }
.g-green { background: radial-gradient(circle, #5aa82f 0 6px, #a7d26b 9px, #fff 13px); }
.g-brown { background: repeating-linear-gradient(45deg, #8d5a3a 0 3px, #eadfce 3px 6px); }

.swatch-group {
  display: flex;
  gap: 1.330px;
  margin-top: 5px;
  align-items: center;
}

.swatch-group:first-of-type {
  margin-top: 3px;
}

.folder {
  width: 25px;
  height: 21px;
}

.panel-foot {
  position: relative;
  height: 42px;
  flex: none;
  display: flex;
  align-items: center;
}

.sw-foot svg {
  width: 24px;
  height: 22px;
}

.sw-foot .f1 { margin-left: 9px; }
.sw-foot .f2 { margin-left: 22px; }
.sw-foot .f3 { margin-left: 86px; }
.sw-foot .f4 { margin-left: 28px; }
.sw-foot .f5 { margin-left: 26px; }
.sw-foot .f6 { margin-left: 28px; }
.sw-foot .f7 { margin-left: 28px; }

.layers-body {
  flex: 1;
  display: flex;
  flex-direction: column;
  padding: 14px 11px 0;
}

.layers-box {
  flex: 1;
  border: 1px solid #5c5c5c;
  border-top: 0;
  border-radius: 0 0 4px 4px;
}

.layer-row {
  position: relative;
  height: 39px;
  display: flex;
  align-items: center;
  background: #52657f;
}

.eye {
  width: 24px;
  height: 16px;
  margin-left: 7px;
}

.lock-cell {
  width: 42px;
  height: 100%;
  margin-left: 7px;
  border-left: 1px solid #4d5e75;
  border-right: 1px solid #4d5e75;
}

.layer-color {
  width: 6px;
  height: 100%;
  margin-left: 2px;
  background: #4f6fdc;
}

.layer-arrow {
  width: 32px;
  margin-left: 6px;
  text-align: center;
  font-size: 28px;
  line-height: 34px;
  color: #e8e8e8;
}

.layer-thumb {
  width: 33px;
  height: 33px;
  margin-left: 9px;
  display: flex;
  padding: 2px 2px 9px;
  background: #fff;
  border: 1px solid #000;
  outline: 1px solid #000;
}

.layer-thumb i {
  flex: 1;
}

.t-pink {
  background: #de808e;
}

.t-teal {
  background: #7ecfc1;
}

.layer-name {
  margin-left: 10px;
  font-size: 19px;
  color: #dfe3ea;
}

.target {
  position: absolute;
  right: 38px;
  top: 13px;
  width: 15px;
  height: 15px;
  border: 2px solid #c8ccd4;
  border-radius: 50%;
}

.corner {
  position: absolute;
  right: 2px;
  top: 1px;
  border-top: 11px solid #d8d8d8;
  border-left: 11px solid transparent;
}

.lay-foot {
  height: 44px;
}

.count {
  width: 123px;
  font-size: 19px;
  color: #d0d0d0;
}

.lay-foot svg {
  width: 22px;
  height: 24px;
}

.lay-foot .l1 { margin-left: 11px; }
.lay-foot .l2 { margin-left: 27px; }
.lay-foot .l3 { margin-left: 27px; }
.lay-foot .l4 { width: 28px; margin-left: 24px; }
.lay-foot .l5 { margin-left: 25px; }
.lay-foot .l6 { margin-left: 26px; }

/* ---------- floating gradient panel ---------- */
.float-panel {
  position: absolute;
  left: 2841px;
  top: 297px;
  width: 471px;
  height: 498px;
  display: flex;
  flex-direction: column;
  background: #535353;
  border: 1px solid #333;
  border-radius: 4px 4px 0 0;
  box-shadow: 0 0 6px rgba(0, 0, 0, 0.35);
  font-size: 19px;
}

.fp-title {
  height: 25px;
  flex: none;
  display: flex;
  justify-content: space-between;
  padding: 0 10px;
  background: #434343;
  border-bottom: 1px solid #393939;
  color: #e0e0e0;
  line-height: 24px;
}

.fp-x {
  font-size: 26px;
}

.fp-collapse {
  font-size: 20px;
}

.fp-tabs {
  height: 51px;
}

.w-gradient em {
  margin-right: 8px;
  font-style: normal;
  font-size: 13px;
  line-height: 10px;
  font-weight: 400;
  text-align: center;
  color: #c0c0c0;
}

.fp-body {
  position: relative;
  flex: 1;
  display: flex;
  flex-direction: column;
  align-items: flex-start;
  padding-left: 172px;
  padding-top: 12px;
}

.fp-left {
  position: absolute;
  left: 11px;
  top: 11px;
  width: 70px;
  height: 385px;
}

.grad-preview {
  display: flex;
  align-items: flex-end;
  gap: 5px;
}

.grad-chip {
  width: 59px;
  height: 59px;
  flex: none;
  background: linear-gradient(90deg, #dc7480, #7fcfc1);
  border: 1px solid #222;
}

.grad-preview i {
  border: 5px solid transparent;
  border-top: 6px solid #e0e0e0;
  margin-bottom: 20px;
  margin-left: 5px;
  border-bottom: 0;
}

.fs-stack.big {
  margin-top: 14px;
}

.reverse {
  display: block;
  width: 30px;
  height: 28px;
  margin: 19px 0 0 8px;
}

.fp-drop {
  display: block;
  width: 34px;
  height: 34px;
  margin: 150px 0 0 10px;
}

.fp-form {
  display: flex;
  flex-direction: column;
  width: 146px;
}

.fp-row {
  position: relative;
  display: flex;
  align-items: center;
}

.fp-label {
  position: absolute;
  right: 154px;
  white-space: nowrap;
  color: #8a8a8a;
}

.fp-label.on {
  color: #d0d0d0;
}

.type-row {
  height: 44px;
}

.stroke-row {
  height: 41px;
  margin-top: 10px;
}

.seg {
  display: flex;
  height: 100%;
  border: 1px solid #5e5e5e;
  border-radius: 4px;
}

.seg b {
  width: 46px;
  display: flex;
  align-items: center;
  justify-content: center;
  border-right: 1px solid #5e5e5e;
}

.seg.off b {
  width: 42px;
}

.seg b:last-child {
  border-right: 0;
}

.seg i {
  width: 30px;
  height: 30px;
  border: 2px solid #c8c8c8;
}

.seg svg {
  width: 28px;
  height: 28px;
}

.gt-linear {
  background: linear-gradient(90deg, #222, #ddd);
}

.gt-radial {
  background: radial-gradient(circle, #eee, #222);
}

.gt-free {
  background: radial-gradient(ellipse at 50% 50%, #ddd, #333 70%);
}

.combo-row {
  height: 39px;
  margin-top: 10px;
}

.fp-ico {
  position: absolute;
  right: 156px;
  width: 30px;
  height: 26px;
}

.combo {
  width: 146px;
  height: 39px;
  padding-right: 13px;
  background: #5a5a5a;
  border-radius: 3px;
  text-align: right;
  color: #787878;
  font-size: 24px;
  line-height: 26px;
}

.fp-ramp {
  position: relative;
  margin: 39px 0 0 -142px;
}

.ramp {
  width: 370px;
  height: 28px;
  background: linear-gradient(90deg, #dc7480, #b09b9a 50%, #7fcfc1);
  border: 1px solid #2b2b2b;
}

.fp-trash {
  position: absolute;
  left: 398px;
  top: 7px;
  width: 19px;
  height: 22px;
}

.fp-lower {
  margin-top: 27px;
}

.fp-foot {
  height: 16px;
  flex: none;
  background: #4d4d4d;
  border-top: 2px solid #3a3a3a;
}

.fp-foot .grip {
  height: 12px;
}

/* ---------- logo badge ---------- */
.logo {
  position: absolute;
  left: 3547px;
  top: 1877px;
  width: 206px;
  height: 206px;
  display: flex;
  align-items: center;
  justify-content: center;
  border-radius: 50%;
  background: #fff;
}

.logo svg {
  width: 100px;
  height: 68px;
}
```
